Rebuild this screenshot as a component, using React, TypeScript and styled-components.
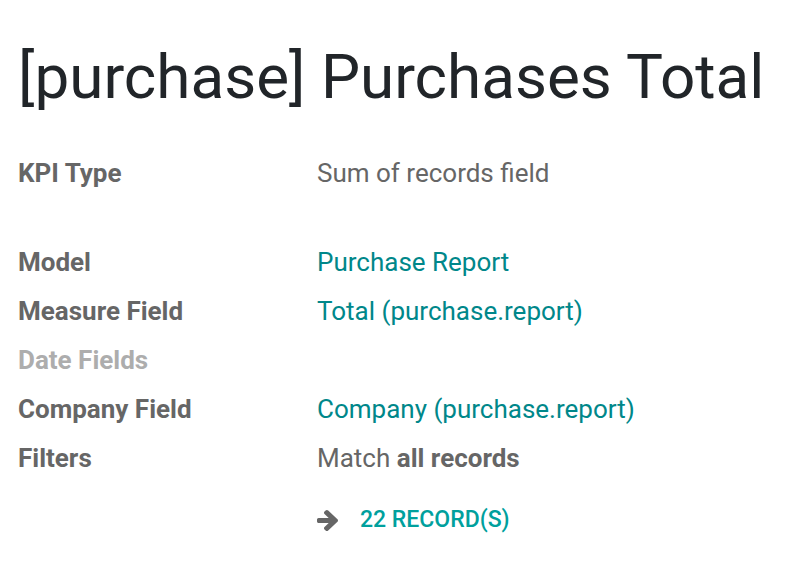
import styled, { createGlobalStyle } from 'styled-components'

const GlobalStyle = createGlobalStyle`
  body {
    margin: 0;
    background: #fff;
    font-family: Roboto, "Noto Sans", sans-serif;
  }
`

const Sheet = styled.div`
  padding: 40px 18px 0;
`

const Title = styled.h1`
  margin: 0 0 43px;
  font-size: 62px;
  font-weight: 400;
  line-height: 74px;
  color: #212529;
`

const FieldGrid = styled.div`
  display: grid;
  grid-template-columns: 299px 1fr;
  row-gap: 17px;
  font-size: 26px;
  line-height: 32px;
`

const Label = styled.div<{ $muted?: boolean }>`
  font-weight: 700;
  color: ${(p) => (p.$muted ? '#adadad' : '#666666')};
`

const Value = styled.div<{ $link?: boolean }>`
  color: ${(p) => (p.$link ? '#00878a' : '#666666')};
  b {
    font-weight: 700;
  }
`

const Spacer = styled.div`
  grid-column: 1 / -1;
  height: 23px;
`

const RecordsButton = styled.div`
  grid-column: 2;
  display: flex;
  align-items: center;
  gap: 22px;
  margin-top: 13px;
  font-size: 23px;
  font-weight: 500;
  color: #00a09d;
  text-transform: uppercase;
`

// fa-arrow-right (v4 glyph)
function ArrowIcon() {
  return (
    <svg width="21" height="21" viewBox="128 181 1472 1558" preserveAspectRatio="none">
      <path
        fill="#666666"
        d="M1600 960q0 54-37 91l-651 651q-39 37-91 37-51 0-90-37l-75-75q-38-38-38-91t38-91l293-293h-704q-52 0-84.5-37.5t-32.5-90.5v-128q0-53 32.5-90.5t84.5-37.5h704l-293-294q-38-36-38-90t38-90l75-75q38-38 90-38 53 0 91 38l651 651q37 35 37 90z"
      />
    </svg>
  )
}

function App() {
  return (
    <Sheet>
      <GlobalStyle />
      <Title>[purchase] Purchases Total</Title>
      <FieldGrid>
        <Label>KPI Type</Label>
        <Value>Sum of records field</Value>
        <Spacer />
        <Label>Model</Label>
        <Value $link>Purchase Report</Value>
        <Label>Measure Field</Label>
        <Value $link>Total (purchase.report)</Value>
        <Label $muted>Date Fields</Label>
        <Value />
        <Label>Company Field</Label>
        <Value $link>Company (purchase.report)</Value>
        <Label>Filters</Label>
        <Value>
          Match <b>all records</b>
        </Value>
        <RecordsButton>
          <ArrowIcon />
          <span>22 Record(s)</span>
        </RecordsButton>
      </FieldGrid>
    </Sheet>
  )
}

export default App
